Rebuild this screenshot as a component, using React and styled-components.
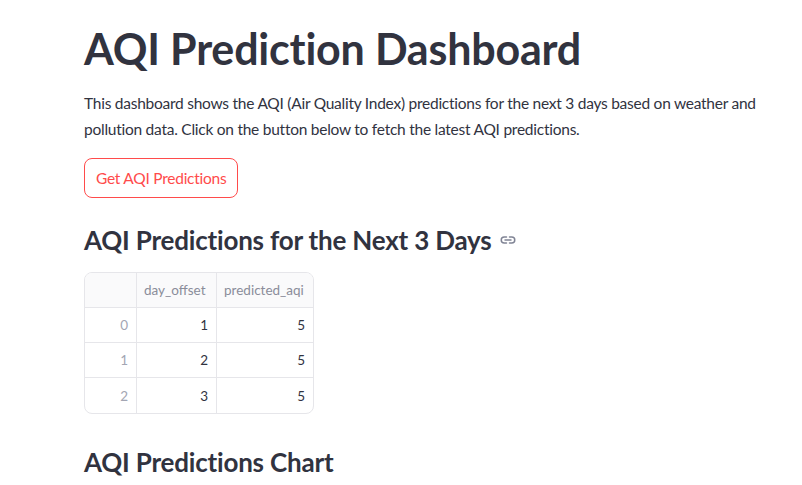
import React from "react";
import styled, { createGlobalStyle } from "styled-components";

const GlobalStyle = createGlobalStyle`
  html, body {
    margin: 0;
    padding: 0;
    background: #ffffff;
  }
  body {
    font-family: "Lato", "Liberation Sans", sans-serif;
    color: #31333f;
    overflow: hidden;
  }
`;

const Main = styled.main`
  width: 802px;
  box-sizing: border-box;
  padding: 23px 0 0 84px;
  display: flex;
  flex-direction: column;
  align-items: flex-start;

  & > * {
    flex-shrink: 0;
  }
`;

const Title = styled.h1`
  margin: 0;
  font-size: 43px;
  font-weight: 700;
  line-height: 52px;
  letter-spacing: -0.2px;
  color: #31333f;
`;

const Intro = styled.p`
  margin: 15px 0 0;
  font-size: 15.5px;
  line-height: 26px;
  letter-spacing: -0.25px;
  max-width: 700px;
`;

const Button = styled.button`
  margin-top: 16px;
  height: 40px;
  padding: 0 11px;
  border: 1px solid #ff4b4b;
  border-radius: 8px;
  background: #ffffff;
  color: #ff4b4b;
  font-family: inherit;
  font-size: 15.5px;
  letter-spacing: -0.25px;
  cursor: pointer;
`;

const Heading = styled.h3`
  margin: ${(p) => p.$top}px 0 0;
  display: flex;
  align-items: center;
  gap: 8px;
  font-size: 26px;
  font-weight: 700;
  line-height: 34px;
  letter-spacing: -0.2px;
  color: #31333f;
`;

const LinkIcon = () => (
  <svg width="18" height="18" viewBox="0 0 24 24" fill="none" stroke="#808495" strokeWidth="2" strokeLinecap="round">
    <path d="M10 8H7a4 4 0 0 0 0 8h3" />
    <path d="M14 8h3a4 4 0 0 1 0 8h-3" />
    <path d="M8 12h8" />
  </svg>
);

const Table = styled.table`
  margin-top: 15px;
  width: 228px;
  table-layout: fixed;
  border-collapse: separate;
  border-spacing: 0;
  border: 1px solid #e6e6ea;
  border-radius: 8px;
  overflow: hidden;
  font-size: 13.5px;
`;

const HeadCell = styled.th`
  height: 35px;
  padding: 0 7px;
  box-sizing: border-box;
  width: ${(p) => p.$w}px;
  font-weight: 400;
  text-align: left;
  color: #8a8d9a;
  background: #fafafb;
  border-bottom: 1px solid #e6e6ea;
  border-left: ${(p) => (p.$first ? "none" : "1px solid #e6e6ea")};
  white-space: nowrap;
`;

const Cell = styled.td`
  height: 35px;
  padding: 0 8px;
  box-sizing: border-box;
  text-align: right;
  color: ${(p) => (p.$index ? "#a3a6b3" : "#31333f")};
  border-bottom: ${(p) => (p.$last ? "none" : "1px solid #e6e6ea")};
  border-left: ${(p) => (p.$first ? "none" : "1px solid #e6e6ea")};
`;

const rows = [
  { idx: 0, day: 1, aqi: 5 },
  { idx: 1, day: 2, aqi: 5 },
  { idx: 2, day: 3, aqi: 5 },
];

export default function App() {
  return (
    <>
      <GlobalStyle />
      <Main>
        <Title>AQI Prediction Dashboard</Title>
        <Intro>
          This dashboard shows the AQI (Air Quality Index) predictions for the next 3 days based on weather and
          pollution data. Click on the button below to fetch the latest AQI predictions.
        </Intro>
        <Button>Get AQI Predictions</Button>
        <Heading $top={25}>
          AQI Predictions for the Next 3 Days
          <LinkIcon />
        </Heading>
        <Table>
          <thead>
            <tr>
              <HeadCell $w={51} $first />
              <HeadCell $w={80}>day_offset</HeadCell>
              <HeadCell $w={97}>predicted_aqi</HeadCell>
            </tr>
          </thead>
          <tbody>
            {rows.map((r, i) => (
              <tr key={r.idx}>
                <Cell $index $first $last={i === rows.length - 1}>{r.idx}</Cell>
                <Cell $last={i === rows.length - 1}>{r.day}</Cell>
                <Cell $last={i === rows.length - 1}>{r.aqi}</Cell>
              </tr>
            ))}
          </tbody>
        </Table>
        <Heading $top={31}>AQI Predictions Chart</Heading>
      </Main>
    </>
  );
}
